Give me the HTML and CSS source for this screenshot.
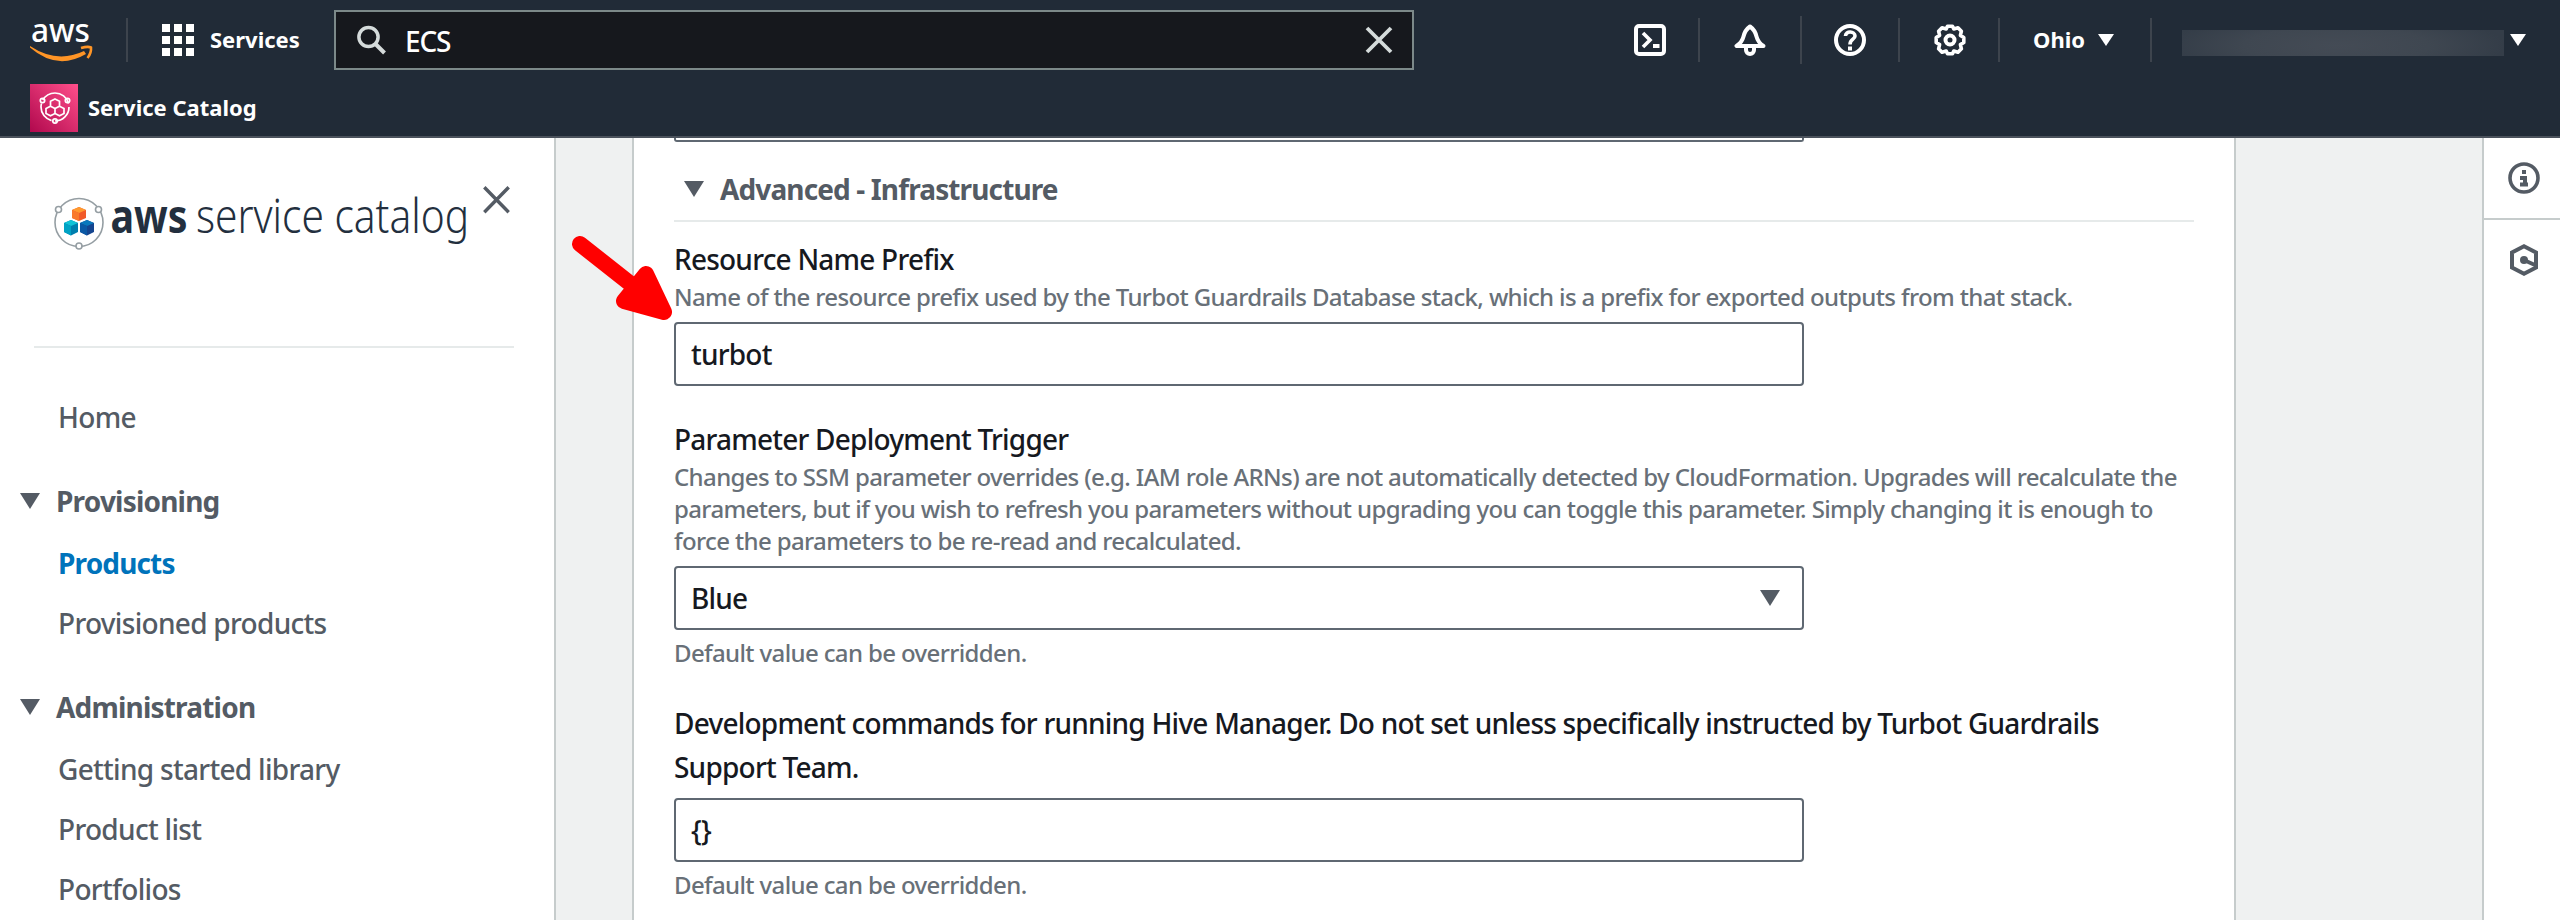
FILE: index.html
```html
<!DOCTYPE html>
<html lang="en">
<head>
<meta charset="utf-8">
<title>AWS Service Catalog</title>
<link rel="stylesheet" href="styles.css">
</head>
<body>
<div class="app">
  <header class="topbar">
    <div class="topbar-main">
      <svg width="66" height="80" viewBox="0 0 66 80">
        <text class="aws-word" x="2" y="41.500" textLength="59" lengthAdjust="spacingAndGlyphs">aws</text>
        <path d="M1 46Q28 64 55 51L57 54Q28 71 1 47.500z" fill="#ff9526"/>
        <path d="M52 48Q59 46 62 47.500Q62.500 53 58.500 58" fill="none" stroke="#ff9526" stroke-width="2.600"/>
      </svg>
      <span class="sep sep-logo"></span>
      <svg width="32" height="32" viewBox="0 0 32 32" fill="#fff">
        <path d="M0 0h8v8H0zM12 0h8v8h-8zM24 0h8v8h-8zM0 12h8v8H0zM12 12h8v8h-8zM24 12h8v8h-8zM0 24h8v8H0zM12 24h8v8h-8zM24 24h8v8h-8z"/>
      </svg>
      <span class="services">Services</span>
      <div class="search">
        <svg width="30" height="30" viewBox="0 0 30 30" fill="none" stroke="#d5dbdb" stroke-width="3.500"><circle cx="11.500" cy="12" r="9.600"/><path d="M18 18.500l9.500 9.500" stroke-width="4"/></svg>
        <span class="query">ECS</span>
        <svg width="28" height="28" viewBox="0 0 28 28" fill="none" stroke="#d5dbdb" stroke-width="3.800"><path d="M2 2l24 24M26 2L2 26"/></svg>
      </div>
      <div class="tools">
        <span class="tool"><svg width="32" height="32" viewBox="0 0 32 32" fill="none" stroke="#fff" stroke-width="4"><rect x="2" y="2" width="28" height="28" rx="3"/><path d="M9 9l7 7-7 7" stroke-width="3.600"/><path d="M19 22h6.500" stroke-width="4"/></svg></span>
        <span class="tool tool-tall"><svg width="32" height="32" viewBox="0 0 32 32" fill="none" stroke="#fff" stroke-width="4" stroke-linejoin="round"><path d="M2.500 22h27Q24 18.500 22.500 12.500Q21 6 16 2.500Q11 6 9.500 12.500Q8 18.500 2.500 22z"/><path d="M12 23v3a4 4 0 0 0 8 0v-3"/></svg></span>
        <span class="tool"><svg width="32" height="32" viewBox="0 0 32 32" fill="none" stroke="#fff" stroke-width="4"><circle cx="16" cy="16" r="14"/><path d="M11.500 12C11.500 6.500 21 7 21 12C21 15.500 16 15 16 20.500" stroke-width="3.600"/><path d="M16 22.500v4"/></svg></span>
        <span class="tool"><svg width="32" height="32" viewBox="0 0 32 32" fill="none" stroke="#fff" stroke-width="4" stroke-linejoin="round"><path d="M13.500 2.200h5l1.300 2.800 4.200-1.200 3.400 3.400-1 4.200 3.400 2.100v5l-3.400 2.100 1 4.200-3.400 3.400-4.200-1.200-1.300 2.800h-5l-1.300-2.800L8 28.200l-3.400-3.400 1-4.200-3.400-2.100v-5l3.400-2.100-1-4.200L8 3.800 12.200 5z" stroke-width="3.600"/><circle cx="16" cy="16" r="4.500"/></svg></span>
      </div>
      <span class="region">Ohio</span>
      <svg width="16" height="12" viewBox="0 0 16 12"><path d="M0 0h16L8 12z" fill="#fff"/></svg>
      <span class="sep sep-account"></span>
      <span class="account"></span>
      <svg class="account-caret" width="16" height="12" viewBox="0 0 16 12"><path d="M0 0h16L8 12z" fill="#fff"/></svg>
    </div>
    <div class="favorites">
      <svg width="48" height="48" viewBox="0 0 48 48">
        <defs><linearGradient id="pink" x1="0" y1="1" x2="1" y2="0"><stop offset="0" stop-color="#b0084d"/><stop offset="1" stop-color="#ff4f8b"/></linearGradient></defs>
        <rect width="48" height="48" fill="url(#pink)"/>
        <g fill="none" stroke="#fff" stroke-width="1.700">
          <circle cx="25" cy="23" r="14" stroke-dasharray="22 3.400 22 3.400 33 4.160"/>
          <circle cx="12.500" cy="16.500" r="2.200"/><circle cx="37.500" cy="16.500" r="2.200"/><circle cx="25" cy="37" r="2.200"/>
          <path d="M25 15l4.500 2.200v5L25 24.500l-4.500-2.300v-5zM20.500 22.200l4.500 2.300v5l-4.500 2.300-4.500-2.300v-5zM29.500 22.200l4.500 2.300v5l-4.500 2.300-4.500-2.300v-5z"/>
        </g>
      </svg>
      <span class="favorite-name">Service Catalog</span>
    </div>
  </header>

  <div class="body">
    <nav class="sidebar">
      <div class="side-head">
        <svg class="product-logo" width="418" height="88" viewBox="0 -20 418 88">
          <g fill="none" stroke="#959ea3" stroke-width="1.600">
            <circle cx="25" cy="25.500" r="24"/>
            <g fill="#fff"><circle cx="4.500" cy="12.500" r="3"/><circle cx="44.500" cy="12.500" r="3"/><circle cx="25" cy="49" r="3"/></g>
          </g>
          <path d="M25 10l7 3v8l-7 3-7-3v-8z" fill="#f15a29"/><path d="M25 10l7 3-7 3-7-3z" fill="#ff9a30"/><path d="M18 13l7 3v8l-7-3z" fill="#f9792c"/>
          <path d="M17 23l7 3v9l-7 3.500L10 35v-9z" fill="#007fae"/><path d="M17 23l7 3-7 3-7-3z" fill="#12c3d6"/><path d="M10 26l7 3v9.500L10 35z" fill="#00a2c4"/>
          <path d="M33 23l7 3v9l-7 3.500L26 35v-9z" fill="#15458f"/><path d="M33 23l7 3-7 3-7-3z" fill="#0a79bd"/><path d="M26 26l7 3v9.500L26 35z" fill="#0b59a5"/>
          <text class="logo-bold" x="56.500" y="36" textLength="77" lengthAdjust="spacingAndGlyphs">aws</text>
          <text class="logo-light" x="142" y="36" textLength="273" lengthAdjust="spacingAndGlyphs">service catalog</text>
        </svg>
        <svg class="close" width="27" height="28" viewBox="0 0 27 28" fill="none" stroke="#545b64" stroke-width="3.400"><path d="M1.300 1.300l24.400 25M25.700 1.300l-24.400 25"/></svg>
      </div>
      <a class="link">Home</a>
      <div class="group"><svg width="20" height="16" viewBox="0 0 20 16"><path d="M0 0h20L10 16z" fill="#545b64"/></svg><span>Provisioning</span></div>
      <div class="links"><a class="link active">Products</a><a class="link">Provisioned products</a></div>
      <div class="group"><svg width="20" height="16" viewBox="0 0 20 16"><path d="M0 0h20L10 16z" fill="#545b64"/></svg><span>Administration</span></div>
      <div class="links"><a class="link">Getting started library</a><a class="link">Product list</a><a class="link">Portfolios</a></div>
    </nav>

    <main class="content">
      <section class="panel">
        <div class="field-end"></div>
        <div class="section-head"><svg width="20" height="16" viewBox="0 0 20 16"><path d="M0 0h20L10 16z" fill="#545b64"/></svg><h2>Advanced - Infrastructure</h2></div>

        <div class="field">
          <label class="label">Resource Name Prefix</label>
          <p class="desc">Name of the resource prefix used by the Turbot Guardrails Database stack, which is a prefix for exported outputs from that stack.</p>
          <div class="input">turbot</div>
        </div>

        <div class="field">
          <label class="label">Parameter Deployment Trigger</label>
          <p class="desc">Changes to SSM parameter overrides (e.g. IAM role ARNs) are not automatically detected by CloudFormation. Upgrades will recalculate the<br>parameters, but if you wish to refresh you parameters without upgrading you can toggle this parameter. Simply changing it is enough to<br>force the parameters to be re-read and recalculated.</p>
          <div class="input">Blue<svg width="20" height="16" viewBox="0 0 20 16"><path d="M0 0h20L10 16z" fill="#545b64"/></svg></div>
          <p class="hint">Default value can be overridden.</p>
        </div>

        <div class="field">
          <label class="label">Development commands for running Hive Manager. Do not set unless specifically instructed by Turbot Guardrails<br>Support Team.</label>
          <div class="input">{}</div>
          <p class="hint">Default value can be overridden.</p>
        </div>
      </section>
    </main>

    <aside class="rail">
      <div class="rail-item"><svg width="32" height="32" viewBox="0 0 32 32" fill="none" stroke="#545b64" stroke-width="3.600"><circle cx="16" cy="16" r="14"/><path d="M14 10h4M12 16h5v7M12 22.500h8" stroke-width="4"/></svg></div>
      <div class="rail-item"><svg width="32" height="32" viewBox="0 0 32 32" fill="none" stroke="#545b64" stroke-width="4"><path d="M16 2.300l12 6.200v15L16 29.700 4 23.500v-15z"/><circle cx="16" cy="16" r="4" fill="#545b64" stroke="none"/><path d="M17 16.500l11 5"/></svg></div>
    </aside>
  </div>

  <svg class="pointer" width="104" height="88" viewBox="0 0 104 88" fill="#f00" stroke="#f00" stroke-width="16" stroke-linecap="round" stroke-linejoin="round">
    <path d="M10 10L74 60.500"/><path d="M76 40L94 78 54 67z"/>
  </svg>
</div>
</body>
</html>
```

FILE: styles.css
```css
* { box-sizing: border-box; }

body {
  margin: 0;
  font-family: "Noto Sans", "Open Sans", sans-serif;
  font-size: 28px;
  font-weight: 500;
  line-height: 44px;
  letter-spacing: -0.78px;
  color: #16191f;
}

svg { display: block; flex: none; }
p, h2 { margin: 0; }

.app {
  position: relative;
  display: flex;
  flex-direction: column;
  width: 2560px;
  height: 920px;
  overflow: hidden;
}

/* Top bar */
.topbar {
  flex: none;
  height: 138px;
  background: #212b37;
  border-bottom: 2px solid #4b525c;
  color: #fff;
  font-size: 22px;
  font-weight: 700;
  letter-spacing: 0;
}
.topbar-main {
  display: flex;
  align-items: center;
  height: 80px;
  padding-left: 29px;
}
.aws-word { font-size: 33px; font-weight: 500; fill: #fff; }
.sep { width: 2px; height: 44px; background: #3d444d; }
.sep-logo { margin: 0 34px 0 31px; }
.services { width: 125px; padding: 0 0 2px 16px; }
.search {
  display: flex;
  align-items: center;
  width: 1080px;
  height: 60px;
  margin-left: 15px;
  padding: 0 19px 0 21px;
  background: #16181d;
  border: 2px solid #7c8989;
}
.query {
  flex: 1;
  padding: 1px 0 0 18px;
  font-size: 28px;
  font-weight: 500;
  letter-spacing: -1.2px;
}
.tools { display: flex; align-items: center; margin-left: 186px; }
.tool {
  display: flex;
  align-items: center;
  width: 100px;
  height: 44px;
  padding-left: 34px;
  border-right: 2px solid #3d444d;
}
.tool-tall { width: 102px; height: 48px; }
.tool-tall + .tool { width: 98px; padding-left: 32px; }
.region { width: 65px; margin-left: 33px; padding-bottom: 2px; }
.sep-account { margin: 0 30px 0 36px; }
.account {
  width: 322px;
  height: 26px;
  margin-top: 6px;
  background: radial-gradient(ellipse 52% 130% at 48% 60%, #444b55 0%, #3f4751 55%, #343d48 100%);
}
.account-caret { margin-left: 6px; }
.favorites {
  display: flex;
  align-items: center;
  gap: 10px;
  padding: 4px 0 0 30px;
}
.favorite-name { padding-bottom: 2px; }

/* Layout below the top bar */
.body { display: flex; flex: 1; min-height: 0; background: #eff1f1; }

/* Sidebar */
.sidebar {
  flex: none;
  width: 556px;
  background: #fff;
  border-right: 2px solid #c6cccc;
  color: #545b64;
  letter-spacing: -0.7px;
}
.side-head {
  display: flex;
  align-items: flex-start;
  height: 210px;
  margin: 0 40px 47px 34px;
  padding-top: 39px;
  border-bottom: 2px solid #e6eaea;
}
.product-logo { margin: 0 11px 0 20px; }
.logo-bold { font-size: 47px; font-weight: 700; fill: #232f3e; letter-spacing: 0; }
.logo-light { font-size: 47px; font-weight: 300; fill: #232f3e; letter-spacing: 0; }
.close { margin-top: 9px; }
.link { display: block; padding-left: 58px; }
.active { color: #0073bb; font-weight: 700; letter-spacing: -0.85px; }
.group {
  display: flex;
  align-items: center;
  gap: 16px;
  margin: 40px 0 18px;
  padding-left: 20px;
  font-weight: 700;
  letter-spacing: -0.8px;
}
.links { display: flex; flex-direction: column; gap: 16px; }

/* Form panel */
.content { flex: 1; padding-left: 76px; }
.panel {
  width: 1604px;
  height: 100%;
  padding: 0 40px;
  background: #fff;
  border: solid #c6cccc;
  border-width: 0 2px;
}
.field-end {
  width: 1130px;
  height: 4px;
  border: solid #5f6872;
  border-width: 0 2px 2px;
  border-radius: 0 0 3px 3px;
}
.section-head {
  display: flex;
  align-items: center;
  gap: 16px;
  height: 80px;
  padding: 16px 0 0 10px;
  border-bottom: 2px solid #e6eaea;
  color: #545b64;
}
.section-head h2 { font-size: 28px; font-weight: 700; letter-spacing: -0.87px; }
.label { display: block; }
.field { margin-top: 31px; }
.section-head + .field { margin-top: 15px; }
.desc, .hint {
  font-size: 24px;
  line-height: 32px;
  letter-spacing: -0.63px;
  color: #687078;
  white-space: nowrap;
}
.hint { margin-top: 7px; }
.input {
  display: flex;
  align-items: center;
  justify-content: space-between;
  width: 1130px;
  height: 64px;
  margin-top: 9px;
  padding: 0 22px 0 15px;
  border: 2px solid #5f6872;
  border-radius: 4px;
}
.hint + .field { margin-top: 32px; }
.field:last-child { margin-top: 32px; }

/* Right rail */
.rail {
  flex: none;
  width: 78px;
  background: #fff;
  border-left: 2px solid #c6cccc;
}
.rail-item { height: 82px; padding: 24px 0 0 24px; border-bottom: 2px solid #c6cccc; }
.rail-item:last-child { border: 0; }

/* Callout arrow drawn over the form */
.pointer { position: absolute; left: 570px; top: 234px; }
```
